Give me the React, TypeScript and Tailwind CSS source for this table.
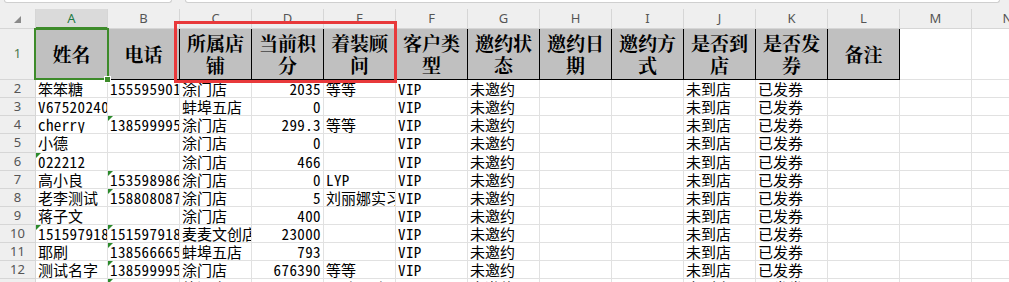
import React from 'react';

const COLS = ['A', 'B', 'C', 'D', 'E', 'F', 'G', 'H', 'I', 'J', 'K', 'L', 'M', 'N'];

const HEADERS = ['姓名', '电话', '所属店铺', '当前积分', '着装顾问', '客户类型', '邀约状态', '邀约日期', '邀约方式', '是否到店', '是否发券', '备注'];

type Row = { n: number; h: string; cells: string[]; tri: number[] };

const ROWS: Row[] = [
  { n: 2, h: 'h-[18px]', cells: ['笨笨糖', '15559590123', '涂门店', '2035', '等等', 'VIP', '未邀约', '', '', '未到店', '已发券', '', '', ''], tri: [] },
  { n: 3, h: 'h-[18px]', cells: ['V6752024035', '', '蚌埠五店', '0', '', 'VIP', '未邀约', '', '', '未到店', '已发券', '', '', ''], tri: [] },
  { n: 4, h: 'h-[18px]', cells: ['cherry', '13859999512', '涂门店', '299.3', '等等', 'VIP', '未邀约', '', '', '未到店', '已发券', '', '', ''], tri: [1] },
  { n: 5, h: 'h-[19px]', cells: ['小德', '', '涂门店', '0', '', 'VIP', '未邀约', '', '', '未到店', '已发券', '', '', ''], tri: [] },
  { n: 6, h: 'h-[18px]', cells: ['022212', '', '涂门店', '466', '', 'VIP', '未邀约', '', '', '未到店', '已发券', '', '', ''], tri: [0] },
  { n: 7, h: 'h-[18px]', cells: ['高小良', '15359898612', '涂门店', '0', 'LYP', 'VIP', '未邀约', '', '', '未到店', '已发券', '', '', ''], tri: [1] },
  { n: 8, h: 'h-[18px]', cells: ['老李测试', '15880808712', '涂门店', '5', '刘丽娜实习', 'VIP', '未邀约', '', '', '未到店', '已发券', '', '', ''], tri: [1] },
  { n: 9, h: 'h-[18px]', cells: ['蒋子文', '', '涂门店', '400', '', 'VIP', '未邀约', '', '', '未到店', '已发券', '', '', ''], tri: [] },
  { n: 10, h: 'h-[18px]', cells: ['15159791888', '15159791888', '麦麦文创店', '23000', '', 'VIP', '未邀约', '', '', '未到店', '已发券', '', '', ''], tri: [0, 1] },
  { n: 11, h: 'h-[18px]', cells: ['耶刷', '13856666512', '蚌埠五店', '793', '', 'VIP', '未邀约', '', '', '未到店', '已发券', '', '', ''], tri: [1] },
  { n: 12, h: 'h-[18px]', cells: ['测试名字', '13859999512', '涂门店', '676390', '等等', 'VIP', '未邀约', '', '', '未到店', '已发券', '', '', ''], tri: [1] },
  { n: 13, h: 'h-[18px]', cells: ['', '13812345678', '徐汇店', '', '王叶月叶', '', '未邀约', '', '', '未到店', '已发券', '', '', ''], tri: [1] },
];

function RowHead({ n, className = '' }: { n: number; className?: string }) {
  return (
    <div
      className={`w-[36px] shrink-0 h-full bg-[#efefef] border-r border-b border-[#d6d6d6] flex items-center justify-center font-['Noto_Sans','Liberation_Sans',sans-serif] text-[13px] ${className}`}
    >
      {n}
    </div>
  );
}

export default function App() {
  return (
    <div className="relative w-[1009px] h-[282px] overflow-hidden bg-white">
      {/* top strip (bottom of name box and formula bar) */}
      <div className="h-[9px] bg-[#efefef] flex items-start gap-[13px] pl-[4px]">
        <div className="w-[168px] h-[3px] bg-white border-x border-b border-[#cfcfcf] rounded-b-[4px]" />
        <div className="w-[815px] h-[3px] bg-white border-x border-b border-[#cfcfcf] rounded-b-[4px]" />
      </div>

      {/* column header row */}
      <div className="flex h-[20px] bg-[#efefef] font-['Noto_Sans','Liberation_Sans',sans-serif] text-[13px] text-[#555]">
        <div className="w-[36px] shrink-0 h-full border-r border-b border-[#d6d6d6] flex items-center justify-center">
          <svg width="7" height="7" viewBox="0 0 7 7" className="mt-[2px]">
            <polygon points="7,0 7,7 0,7" fill="#8a8a8a" />
          </svg>
        </div>
        {COLS.map((c) =>
          c === 'A' ? (
            <div
              key={c}
              className="w-[72px] shrink-0 h-full bg-[#dadada] border-r border-[#d6d6d6] border-b-2 border-b-[#3d8b2a] text-[#1f7a45] flex items-center justify-center pt-[1px]"
            >
              {c}
            </div>
          ) : (
            <div
              key={c}
              className="w-[72px] shrink-0 h-full border-r border-b border-[#d6d6d6] flex items-center justify-center"
            >
              {c}
            </div>
          )
        )}
      </div>

      {/* row 1 - headers */}
      <div className="flex h-[51px]">
        <RowHead n={1} className="text-[#4a7a4c]" />
        {HEADERS.map((t, i) => (
          <div
            key={i}
            className="w-[72px] shrink-0 h-full bg-[#c0c0c0] border-r border-b border-black flex items-center justify-center text-center px-[4px] font-['Noto_Serif_CJK_SC','Noto_Sans_CJK_SC',serif] font-bold text-[19px] leading-[22px] text-black"
          >
            {t}
          </div>
        ))}
        <div className="w-[72px] shrink-0 h-full border-r border-b border-[#e1e1e1]" />
        <div className="w-[72px] shrink-0 h-full border-r border-b border-[#e1e1e1]" />
      </div>

      {/* data rows */}
      {ROWS.map((r) => (
        <div key={r.n} className={`flex ${r.h}`}>
          <RowHead n={r.n} className="text-[#555]" />
          {r.cells.map((v, ci) => {
            const ascii = /^[\x00-\x7f]*$/.test(v);
            const right = ci === 3;
            return (
              <div
                key={ci}
                className={`relative w-[72px] shrink-0 h-full border-r border-b border-[#e1e1e1] overflow-hidden whitespace-nowrap font-['Noto_Sans_Mono_CJK_SC','Noto_Sans_CJK_SC',monospace] text-[15px] leading-[17px] text-black ${
                  right ? 'text-right pr-[2px]' : 'text-left pl-[2px]'
                } ${ascii ? 'tracking-[0.4px]' : ''}`}
              >
                {r.tri.includes(ci) && (
                  <div className="absolute left-0 top-0 w-[5px] h-[5px] bg-[#2b8a2b] [clip-path:polygon(0_0,100%_0,0_100%)]" />
                )}
                {v}
              </div>
            );
          })}
        </div>
      ))}

      {/* selection border on A1 */}
      <div className="absolute left-[34px] top-[28px] w-[75px] h-[52px] border-2 border-[#3d8b2a] pointer-events-none" />
      <div className="absolute left-[104px] top-[76px] w-[7px] h-[7px] bg-[#3d8b2a] border border-white pointer-events-none" />

      {/* red annotation rectangle */}
      <div className="absolute left-[174px] top-[21px] w-[223px] h-[62px] border-[3px] border-[#e8393b] pointer-events-none" />
    </div>
  );
}
